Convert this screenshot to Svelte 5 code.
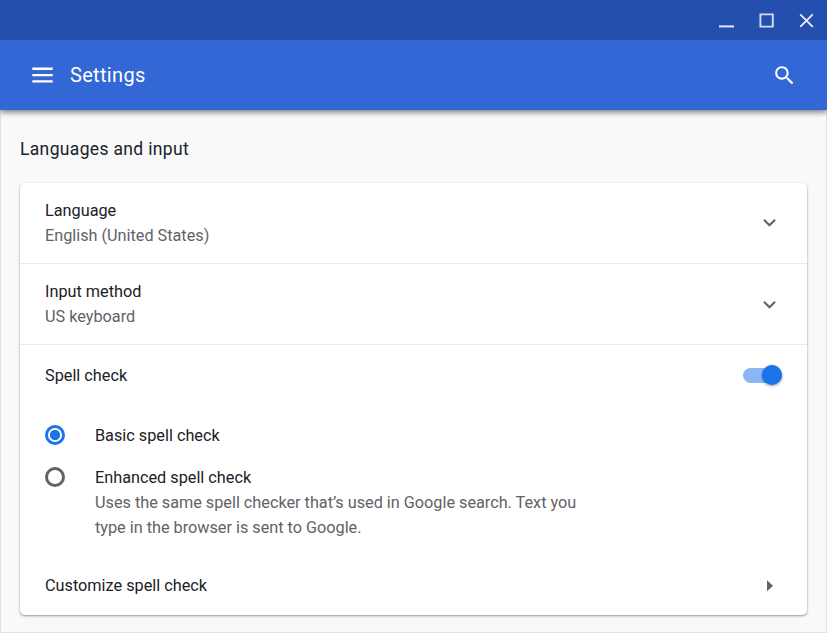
<script>
  let enabled = $state(true);
  let mode = $state('basic');
  const dropdowns = [
    { title: 'Language', value: 'English (United States)', y: 0.9 },
    { title: 'Input method', value: 'US keyboard', y: 0 }
  ];
</script>

<div class="window">
  <div class="titlebar">
    <svg width="20" height="20" viewBox="0 0 20 20"><path d="M3 16.4h15" stroke="#e6eaf3" stroke-width="2" /></svg>
    <svg width="20" height="20" viewBox="0 0 20 20"><path d="M4.4 4.4h12.4v12.2H4.4z" fill="none" stroke="#d5dcec" stroke-width="1.9" /></svg>
    <svg width="20" height="20" viewBox="0 0 20 20"><path d="M4.2 4.3l12.6 12.6M16.8 4.3L4.2 16.9" fill="none" stroke="#e6eaf3" stroke-width="1.9" /></svg>
  </div>
  <header>
    <svg width="21" height="16" viewBox="0 0 21 16"><path d="M.3 1.7h20.4M.3 8.1h20.4M.3 14.4h20.4" stroke="#fff" stroke-width="2.4" /></svg>
    <h1>Settings</h1>
    <svg class="search" width="25" height="25" viewBox="0 0 24 24" fill="#fff"><path d="M15.5 14h-.79l-.28-.27A6.471 6.471 0 0 0 16 9.5 6.5 6.5 0 1 0 9.5 16c1.61 0 3.09-.59 4.23-1.57l.27.28v.79l5 4.99L20.49 19l-4.99-5zm-6 0C7.01 14 5 11.99 5 9.5S7.01 5 9.5 5 14 7.01 14 9.5 11.99 14 9.5 14z" /></svg>
  </header>
  <main>
    <h2>Languages and input</h2>
    <section class="card">
      {#each dropdowns as item}
        <div class="row tall">
          <div class="labels">
            <div>{item.title}</div>
            <div class="secondary">{item.value}</div>
          </div>
          <svg width="25" height="25" viewBox="0 {item.y} 24 24" fill="#5f6368"><path d="M16.59 8.59L12 13.17 7.41 8.59 6 10l6 6 6-6z" /></svg>
        </div>
      {/each}
      <div class="row">
        <div>Spell check</div>
        <button class="toggle" class:on={enabled} aria-label="Spell check" onclick={() => (enabled = !enabled)}><span></span></button>
      </div>
      <div class="options">
        <div class="option">
          <button class="radio" class:checked={mode === 'basic'} aria-label="Basic spell check" onclick={() => (mode = 'basic')}></button>
          <div>Basic spell check</div>
        </div>
        <div class="option">
          <button class="radio" class:checked={mode === 'enhanced'} aria-label="Enhanced spell check" onclick={() => (mode = 'enhanced')}></button>
          <div>
            <div>Enhanced spell check</div>
            <div class="secondary">Uses the same spell checker that’s used in Google search. Text you<br />type in the browser is sent to Google.</div>
          </div>
        </div>
      </div>
      <div class="row">
        <div>Customize spell check</div>
        <svg class="arrow" width="6" height="13" viewBox="0 0 6 13"><path d="M0 1.3l6 5.5-6 5.5z" fill="#5f6368" /></svg>
      </div>
    </section>
  </main>
</div>

<style>
  :global(body) { margin: 0; }
  .window {
    box-sizing: border-box;
    width: 827px;
    height: 633px;
    display: flex;
    flex-direction: column;
    overflow: hidden;
    background: #f8f9fa;
    color: #202124;
    font: 16.25px/25px Roboto, sans-serif;
  }
  svg { display: block; flex: none; }
  .titlebar {
    height: 40px;
    display: flex;
    align-items: center;
    justify-content: flex-end;
    gap: 20px;
    box-sizing: border-box;
    padding-right: 11px;
    background: #254fae;
  }
  header {
    position: relative;
    height: 70px;
    display: flex;
    align-items: center;
    box-sizing: border-box;
    padding: 0 30px 0 32px;
    background: #3367d6;
    box-shadow: 0 2px 6px rgba(0, 0, 0, .55);
    clip-path: inset(0 0 -8px 0);
  }
  h1 {
    margin: 0 auto 0 17px;
    color: #fff;
    font-size: 20px;
    font-weight: 400;
    letter-spacing: .32px;
  }
  main {
    flex: 1;
    padding: 0 19px;
    border: solid #dfe1e3;
    border-width: 0 1px 1px;
  }
  h2 {
    margin: 26px 0 21px;
    font-size: 17.5px;
    line-height: 26px;
    font-weight: 400;
    letter-spacing: .34px;
  }
  .card {
    height: 432px;
    border-radius: 5px;
    background: #fff;
    box-shadow: 0 1px 2px rgba(60, 64, 67, .4), 0 1px 3px rgba(60, 64, 67, .2);
  }
  .row {
    box-sizing: border-box;
    height: 60px;
    padding: 0 25px;
    display: flex;
    align-items: center;
    justify-content: space-between;
  }
  .tall { height: 81px; border-bottom: 1px solid #e9eaeb; }
  .labels { padding-bottom: 1px; }
  .secondary { color: #5f6368; letter-spacing: -.01px; }
  .toggle {
    width: 39px;
    height: 15px;
    padding: 0;
    border: 0;
    border-radius: 8px;
    display: flex;
    align-items: center;
    background: #bdc1c6;
  }
  .toggle.on { justify-content: flex-end; background: #8ab6f5; }
  .toggle span {
    flex: none;
    width: 20px;
    height: 20px;
    border-radius: 50%;
    background: #fff;
    box-shadow: 0 1px 3px rgba(0, 0, 0, .4);
  }
  .toggle.on span { background: #1a73e8; }
  .arrow { margin-right: 9px; }
  .options {
    height: 150px;
    box-sizing: border-box;
    padding: 18px 25px 0;
    display: flex;
    flex-direction: column;
    gap: 17px;
  }
  .option { display: flex; gap: 30px; }
  .radio {
    flex: none;
    box-sizing: border-box;
    width: 20px;
    height: 20px;
    margin: 2px 0 0;
    padding: 0;
    border: 3px solid #5f6368;
    border-radius: 50%;
    background: none;
  }
  .radio.checked { border-color: #1a73e8; background: radial-gradient(circle, #1a73e8 4.7px, #fff 5.5px); }
</style>
